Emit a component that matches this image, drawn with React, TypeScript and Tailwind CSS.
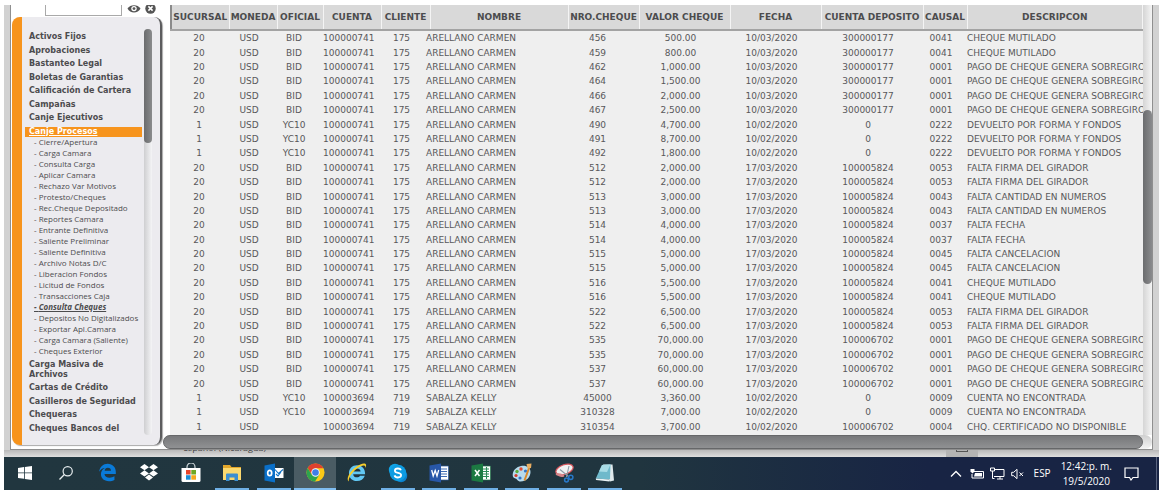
import React from "react";

const sobregiro = "PAGO DE CHEQUE GENERA SOBREGIRO";
const acc = "100000741";
const arellano = "ARELLANO CARMEN";

function bid(nro: string, valor: string, fecha: string, dep: string, causal: string, desc: string): string[] {
  return ["20", "USD", "BID", acc, "175", arellano, nro, valor, fecha, dep, causal, desc];
}

function yc(cuenta: string, cliente: string, nombre: string, nro: string, valor: string, causal: string, desc: string): string[] {
  return ["1", "USD", "YC10", cuenta, cliente, nombre, nro, valor, "10/02/2020", "0", causal, desc];
}

const rows: string[][] = [
  bid("456", "500.00", "10/03/2020", "300000177", "0041", "CHEQUE MUTILADO"),
  bid("459", "800.00", "10/03/2020", "300000177", "0041", "CHEQUE MUTILADO"),
  bid("462", "1,000.00", "10/03/2020", "300000177", "0001", sobregiro),
  bid("464", "1,500.00", "10/03/2020", "300000177", "0001", sobregiro),
  bid("466", "2,000.00", "10/03/2020", "300000177", "0001", sobregiro),
  bid("467", "2,500.00", "10/03/2020", "300000177", "0001", sobregiro),
  yc(acc, "175", arellano, "490", "4,700.00", "0222", "DEVUELTO POR FORMA Y FONDOS"),
  yc(acc, "175", arellano, "491", "8,700.00", "0222", "DEVUELTO POR FORMA Y FONDOS"),
  yc(acc, "175", arellano, "492", "1,800.00", "0222", "DEVUELTO POR FORMA Y FONDOS"),
  bid("512", "2,000.00", "17/03/2020", "100005824", "0053", "FALTA FIRMA DEL GIRADOR"),
  bid("512", "2,000.00", "17/03/2020", "100005824", "0053", "FALTA FIRMA DEL GIRADOR"),
  bid("513", "3,000.00", "17/03/2020", "100005824", "0043", "FALTA CANTIDAD EN NUMEROS"),
  bid("513", "3,000.00", "17/03/2020", "100005824", "0043", "FALTA CANTIDAD EN NUMEROS"),
  bid("514", "4,000.00", "17/03/2020", "100005824", "0037", "FALTA FECHA"),
  bid("514", "4,000.00", "17/03/2020", "100005824", "0037", "FALTA FECHA"),
  bid("515", "5,000.00", "17/03/2020", "100005824", "0045", "FALTA CANCELACION"),
  bid("515", "5,000.00", "17/03/2020", "100005824", "0045", "FALTA CANCELACION"),
  bid("516", "5,500.00", "17/03/2020", "100005824", "0041", "CHEQUE MUTILADO"),
  bid("516", "5,500.00", "17/03/2020", "100005824", "0041", "CHEQUE MUTILADO"),
  bid("522", "6,500.00", "17/03/2020", "100005824", "0053", "FALTA FIRMA DEL GIRADOR"),
  bid("522", "6,500.00", "17/03/2020", "100005824", "0053", "FALTA FIRMA DEL GIRADOR"),
  bid("535", "70,000.00", "17/03/2020", "100006702", "0001", sobregiro),
  bid("535", "70,000.00", "17/03/2020", "100006702", "0001", sobregiro),
  bid("537", "60,000.00", "17/03/2020", "100006702", "0001", sobregiro),
  bid("537", "60,000.00", "17/03/2020", "100006702", "0001", sobregiro),
  yc("100003694", "719", "SABALZA KELLY", "45000", "3,360.00", "0009", "CUENTA NO ENCONTRADA"),
  yc("100003694", "719", "SABALZA KELLY", "310328", "7,000.00", "0009", "CUENTA NO ENCONTRADA"),
  ["1", "USD", "", "100003694", "719", "SABALZA KELLY", "310354", "3,700.00", "10/02/2020", "100006702", "0004", "CHQ. CERTIFICADO NO DISPONIBLE"],
];

const columns = [
  { title: "SUCURSAL", col: "w-[58px]", cell: "pr-0.5 text-center" },
  { title: "MONEDA", col: "w-[48px]", cell: "pr-2 text-center" },
  { title: "OFICIAL", col: "w-[46px]", cell: "pr-3 text-center" },
  { title: "CUENTA", col: "w-[58px]", cell: "pr-2 text-center" },
  { title: "CLIENTE", col: "w-[49px]", cell: "pr-2 text-center" },
  { title: "NOMBRE", col: "w-[138px]", cell: "-indent-1 text-left" },
  { title: "NRO.CHEQUE", col: "w-[71px]", cell: "pr-3 text-center" },
  { title: "VALOR CHEQUE", col: "w-[91px]", cell: "pr-2 text-center" },
  { title: "FECHA", col: "w-[91px]", cell: "pr-2 text-center" },
  { title: "CUENTA DEPOSITO", col: "w-[102px]", cell: "pr-2 text-center" },
  { title: "CAUSAL", col: "w-[44px]", cell: "pr-2 text-center" },
  { title: "DESCRIPCON", col: "", cell: "text-left" },
];

const menuTop = ["Activos Fijos", "Aprobaciones", "Bastanteo Legal", "Boletas de Garantias", "Calificación de Cartera", "Campañas", "Canje Ejecutivos"];
const subMenu = [
  "Cierre/Apertura", "Carga Camara", "Consulta Carga", "Aplicar Camara", "Rechazo Var Motivos", "Protesto/Cheques",
  "Rec.Cheque Depositado", "Reportes Camara", "Entrante Definitiva", "Saliente Preliminar", "Saliente Definitiva",
  "Archivo Notas D/C", "Liberacion Fondos", "Licitud de Fondos", "Transacciones Caja", "Consulta Cheques",
  "Depositos No Digitalizados", "Exportar Apl.Camara", "Carga Camara (Saliente)", "Cheques Exterior",
];
const menuBottom = ["Carga Masiva de Archivos", "Cartas de Crédito", "Casilleros de Seguridad", "Chequeras", "Cheques Bancos del"];

function Sidebar() {
  return (
    <aside className="flex w-[151px] shrink-0 flex-col">
      <div className="flex h-3 items-start">
        <input aria-label="Buscar" className="ml-[34px] h-[11px] w-[77px] border border-t-0 border-[#a9a9a9] bg-white px-1 text-[8px] outline-none" />
        <button aria-label="Ver" className="ml-[5px] h-2 w-3.5">
          <svg viewBox="0 0 14 8" className="block h-2 w-3.5">
            <path d="M0.5 3.5C3-1 11-1 13.5 3.5C11 8.8 3 8.8 0.5 3.5Z" fill="#555" />
            <circle cx="7" cy="3.6" r="2.7" fill="#fff" />
            <circle cx="7" cy="3.6" r="1.4" fill="#555" />
          </svg>
        </button>
        <button aria-label="Cerrar" className="ml-1 h-[9px] w-[11px]">
          <svg viewBox="0 0 11 9" className="block h-[9px] w-[11px]">
            <circle cx="5.5" cy="3.5" r="5.2" fill="#555" />
            <path d="M3.4 1.4l4.2 4.2M7.6 1.4L3.4 5.6" stroke="#fff" strokeWidth="1.5" />
          </svg>
        </button>
      </div>
      <div className="ml-px flex flex-1 rounded-lg border-r-2 border-[#5c5c5e] bg-[#ecebef] shadow-[1px_1px_1px_#aaa]">
        <div className="w-[10px] shrink-0 rounded-l-lg bg-[#f7941d]" />
        <nav className="mt-[15px] mb-[11px] flex min-w-0 flex-1 flex-col justify-between pl-[3px] text-[8px] leading-[10px] font-bold text-[#4c4c4e]">
          {menuTop.map((m) => (
            <a key={m} href="#" className="block pl-1 whitespace-nowrap">{m}</a>
          ))}
          <a href="#" className="block bg-[#f7941d] pl-1 text-white underline">Canje Procesos</a>
          <ul className="-mt-1 pl-[9px] font-['Open_Sans',sans-serif] leading-[11px] font-normal whitespace-nowrap">
            {subMenu.map((m) => (
              <li key={m}>
                <a href="#" className={m === "Consulta Cheques" ? "block font-bold italic underline" : "block"}>- {m}</a>
              </li>
            ))}
          </ul>
          {menuBottom.map((m) => (
            <a key={m} href="#" className={m.startsWith("Carga") ? "block w-[90px] pl-1" : "block pl-1 whitespace-nowrap"}>{m}</a>
          ))}
        </nav>
        <div className="mt-3 mr-2 mb-2.5 ml-0.5 w-2 shrink-0 rounded-full bg-linear-to-r from-[#cfcfd1] to-[#f4f4f6]">
          <div className="h-[114px] rounded-full bg-linear-to-r from-[#6b6c6e] to-[#8a8b8d]" />
        </div>
      </div>
    </aside>
  );
}

function Results() {
  return (
    <div className="min-w-0 flex-1 overflow-hidden bg-[#efefef] pb-px">
      <table className="h-full w-full table-fixed border-collapse text-[9px] leading-[14px] whitespace-nowrap text-[#58585a]">
        <colgroup>
          {columns.map((c) => (
            <col key={c.title} className={c.col} />
          ))}
        </colgroup>
        <thead>
          <tr className="h-[25px] border-b-2 border-l-2 border-b-[#a3a3a3] border-l-[#8a8a8a] bg-[#d9d9d9]">
            {columns.map((c) => (
              <th key={c.title} className="border-r border-[#f4f4f4] p-0 text-center font-bold text-[#4c4c4e]">{c.title}</th>
            ))}
          </tr>
        </thead>
        <tbody>
          {rows.map((r, i) => (
            <tr key={i}>
              {r.map((v, j) => (
                <td key={j} className={`py-0 pl-0 ${columns[j].cell}`}>{v}</td>
              ))}
            </tr>
          ))}
        </tbody>
      </table>
    </div>
  );
}

const Start = () => (
  <svg viewBox="0 0 16 16" className="size-4"><path d="M1 3l6-.9v5.4H1zM7.8 2L15 1v6.5H7.800zM1 8.300h6v5.500L1 13zM7.800 8.300H15V15l-7.200-1z" fill="#fff" /></svg>
);
const Search = () => (
  <svg viewBox="0 0 16 16" className="size-4"><circle cx="9.700" cy="6.200" r="4.600" fill="none" stroke="#e8eef0" strokeWidth="1.200" /><path d="M6.400 9.500L1.500 14.500" stroke="#e8eef0" strokeWidth="1.300" /></svg>
);
const Edge = () => (
  <svg viewBox="0 0 24 24" className="size-[19px]"><path d="M1.500 11C2.200 5 6.500 1 12.200 1C18.500 1 22.500 5.500 22.500 11.500V14H8.200c.3 3.200 3 4.600 6.300 4.600 2.400 0 4.600-.7 6.300-1.800v4.600C18.900 22.500 16.400 23 13.800 23 7.600 23 3.700 19.300 3.700 14c0-3.400 1.900-6.200 5-7.700C5.600 6.500 3.200 8.200 1.500 11zM8.400 9.900h8c0-2.500-1.400-4-3.900-4-2.300 0-3.800 1.600-4.100 4z" fill="#0a7ad8" /></svg>
);
const Dropbox = () => (
  <svg viewBox="0 0 20 17" className="h-[17px] w-5"><path d="M5.500 0L10 3.200 5.500 6.300 1 3.200zM14.500 0L19 3.200l-4.500 3.100L10 3.200zM5.500 6.300L10 9.500l-4.500 3.100L1 9.500zM14.500 6.300L19 9.500l-4.500 3.100L10 9.500zM10 10.600l4 2.900-4 3-4-3z" fill="#fff" /></svg>
);
const Store = () => (
  <svg viewBox="0 0 20 20" className="size-5"><path d="M6 6V4a4 4 0 0 1 8 0v2" fill="none" stroke="#cfd8db" strokeWidth="1.200" /><path d="M0.500 5h19v12.500a1.500 1.500 0 0 1-1.500 1.500H2a1.500 1.500 0 0 1-1.500-1.500z" fill="#fff" /><path d="M5 7h4.600v4.500H5z" fill="#e8442a" /><path d="M10.300 7H15v4.500h-4.700z" fill="#6fa823" /><path d="M5 12.200h4.600v4.500H5z" fill="#1b8fd8" /><path d="M10.300 12.200H15v4.500h-4.700z" fill="#f5a81c" /></svg>
);
const Folder = () => (
  <svg viewBox="0 0 20 18" className="h-[18px] w-5"><path d="M1 1h7l1.500 2H19v13H1z" fill="#e3a72b" /><path d="M1 4h18v12H1z" fill="#fbd96f" /><path d="M4 17v-6.500a1 1 0 0 1 1-1h10a1 1 0 0 1 1 1V17h-3.500v-3.500h-5V17z" fill="#3d8fd1" /></svg>
);
const Outlook = () => (
  <svg viewBox="0 0 20 20" className="size-5"><path d="M10 5h9.500v10H10z" fill="#fff" /><path d="M11 6.500l3.500 4 4.500-4M12 11l2 2 3-4" fill="none" stroke="#1273c4" strokeWidth="1.100" /><path d="M0.500 2.500L11 .5v19L.5 17.500z" fill="#0a6fc8" /><ellipse cx="5.700" cy="10" rx="2" ry="2.700" fill="none" stroke="#fff" strokeWidth="1.700" /></svg>
);
const Chrome = () => (
  <svg viewBox="0 0 20 20" className="size-[19px]"><circle cx="10" cy="10" r="9.500" fill="#fbc916" /><path d="M1.800 5.200A9.500 9.500 0 0 1 18.300 5.500H10L6 12z" fill="#e0402f" /><path d="M1.800 5.200A9.500 9.500 0 0 0 9.500 19.500L14 12.300H6z" fill="#2da44e" /><circle cx="10" cy="10" r="4.400" fill="#fff" /><circle cx="10" cy="10" r="3.500" fill="#3f7ee8" /></svg>
);
const Explorer = () => (
  <svg viewBox="0 0 22 22" className="size-[21px]"><path d="M20 12.800H7.500c.3 2.300 1.900 3.300 3.900 3.300 1.500 0 2.700-.6 3.300-1.700h5c-1.200 3.600-4.300 5.600-8.300 5.600-5 0-8.300-3.300-8.300-8.200 0-5 3.400-8.400 8.400-8.400 5.300 0 8.700 3.600 8.500 9.400zM7.600 9.900h7.700c-.2-1.900-1.600-3-3.700-3s-3.600 1.100-4 3z" fill="#62c8f4" /><path d="M3 20.500C-.5 18 4 10 10 5.500S20.500.500 21 3c.2 1-.2 2.200-1 3.500.3-1.600 0-2.500-1-2.800C15.500 3 7 9.500 4 15.500c-1.200 2.600-1.300 4.200-1 5z" fill="#f7cf2c" /></svg>
);
const Skype = () => (
  <svg viewBox="0 0 20 20" className="size-5"><circle cx="7" cy="7" r="6.200" fill="#12a5e8" /><circle cx="13" cy="13" r="6.200" fill="#0b83d0" /><circle cx="10" cy="10" r="8.300" fill="#0e9ce2" /><path d="M13 7.300C12.500 6 11.300 5.500 9.900 5.500c-1.700 0-3 .8-3 2.200 0 3 6.200 1.500 6.200 4.400 0 1.500-1.300 2.400-3.200 2.400-1.700 0-2.900-.7-3.400-2.100" fill="none" stroke="#fff" strokeWidth="1.800" /></svg>
);
const Word = () => (
  <svg viewBox="0 0 20 20" className="size-5"><path d="M10 3h9.500v14H10z" fill="#fff" stroke="#2b579a" strokeWidth=".7" /><path d="M12 6h6M12 8.500h6M12 11h6M12 13.500h6" stroke="#3d6cb5" strokeWidth="1" /><path d="M0.500 2.500L12 .5v19L.5 17.500z" fill="#2857a8" /><path d="M2.700 7l1.500 6L6.200 7.500 8 13l1.700-6" fill="none" stroke="#fff" strokeWidth="1.300" /></svg>
);
const Excel = () => (
  <svg viewBox="0 0 20 20" className="size-5"><path d="M10 3h9.500v14H10z" fill="#fff" stroke="#1e7145" strokeWidth=".7" /><path d="M12 6h6M12 8.500h6M12 11h6M12 13.500h6M15.500 4v12" stroke="#2b8a56" strokeWidth="1.100" /><path d="M0.500 2.500L12 .5v19L.5 17.500z" fill="#1c7a42" /><path d="M4 7l4.500 6M8.500 7L4 13" stroke="#fff" strokeWidth="1.500" /></svg>
);
const Paint = () => (
  <svg viewBox="0 0 20 20" className="size-5"><path d="M9 3c5-1 9.500 1.500 9.500 6 0 5-4 9.500-10 9.500-3 0-3-2.500-5-3S.500 14 .7 11.500C1 7 4.500 4 9 3z" fill="#b7dbee" /><circle cx="5" cy="8.500" r="1.700" fill="#5cae3b" /><circle cx="9" cy="6" r="1.700" fill="#e2492f" /><circle cx="4" cy="12.500" r="1.600" fill="#d93d2b" /><circle cx="13.500" cy="8" r="1.600" fill="#2f74c9" /><circle cx="8" cy="15" r="1.600" fill="#2f74c9" /><path d="M18 2.500L12.500 17.500" stroke="#d98a2b" strokeWidth="2" /><path d="M14.500 1l5-.5-.5 4.500-3.500.5z" fill="#e9ae62" /></svg>
);
const Snip = () => (
  <svg viewBox="0 0 20 20" className="size-5"><ellipse cx="10.500" cy="6.500" rx="9" ry="4.800" transform="rotate(-20 10.500 6.500)" fill="#f1f1f1" stroke="#d6555c" strokeWidth="1.200" /><ellipse cx="6" cy="12" rx="4.500" ry="1.500" transform="rotate(15 6 12)" fill="#d6858a" /><path d="M6 6.500l8.500 7M15 3l-2.500 11" stroke="#8d9aa5" strokeWidth="1.100" /><circle cx="16.800" cy="14.300" r="2.100" fill="none" stroke="#2878c8" strokeWidth="1.500" /><circle cx="12.500" cy="17" r="1.900" fill="none" stroke="#2878c8" strokeWidth="1.500" /></svg>
);
const Notepad = () => (
  <svg viewBox="0 0 20 20" className="size-5"><path d="M8 1.500h9.500l1.500 16-4 1z" fill="#dfe9ec" /><path d="M7 2l8.500-.5L15 16.500.800 15.500z" fill="#6fb9cb" /><path d="M7 2l8.500-.5L12 9 4 8.500z" fill="#a8dce6" /><path d="M.800 15.500L15 16.500l-.5 2L1 17z" fill="#e9f3f5" /></svg>
);

const apps = [
  { name: "Inicio", Icon: Start, state: "idle" },
  { name: "Buscar en Windows", Icon: Search, state: "idle" },
  { name: "Edge", Icon: Edge, state: "idle" },
  { name: "Dropbox", Icon: Dropbox, state: "idle" },
  { name: "Store", Icon: Store, state: "idle" },
  { name: "Explorador", Icon: Folder, state: "open" },
  { name: "Outlook", Icon: Outlook, state: "open" },
  { name: "Chrome", Icon: Chrome, state: "active" },
  { name: "Internet Explorer", Icon: Explorer, state: "idle" },
  { name: "Skype", Icon: Skype, state: "open" },
  { name: "Word", Icon: Word, state: "open" },
  { name: "Excel", Icon: Excel, state: "open" },
  { name: "Paint", Icon: Paint, state: "open" },
  { name: "Recortes", Icon: Snip, state: "open" },
  { name: "Bloc de notas", Icon: Notepad, state: "open" },
];

function Taskbar() {
  return (
    <footer className="flex h-[33px] items-stretch bg-linear-to-r from-[#21363f] via-[#20353f] via-55% to-[#182444] to-80% text-white">
      <div className="flex w-[622px] shrink-0">
        {apps.map(({ name, Icon, state }) => (
          <button key={name} aria-label={name} className={state === "active" ? "flex flex-1 flex-col items-center bg-[#4a5c64]" : "flex flex-1 flex-col items-center"}>
            <span className="flex flex-1 items-center justify-center"><Icon /></span>
            <span className={state === "idle" ? "h-0.5 w-[34px]" : state === "open" ? "h-0.5 w-[34px] bg-[#6fb0e6]" : "h-0.5 w-full bg-[#7fbdf0]"} />
          </button>
        ))}
      </div>
      <div className="ml-auto flex items-center font-['Open_Sans',sans-serif] text-[10px]">
        <svg viewBox="0 0 12 8" className="h-2 w-3" aria-label="Mostrar iconos"><path d="M1 6.500l5-5 5 5" fill="none" stroke="#fff" strokeWidth="1.300" /></svg>
        <svg viewBox="0 0 14 12" className="ml-2 h-3 w-3.5"><path d="M4 3.500h9.500v6.500H2V6" fill="none" stroke="#fff" /><path d="M5 5h7v3.500H4z" fill="#fff" /><path d="M.5 1h4v2.500l-2 2-2-2z" fill="#fff" /></svg>
        <svg viewBox="0 0 15 13" className="ml-1.5 h-[13px] w-[15px]"><path d="M4.500 2.500H14v7H4M7 12h6M10 9.500V12M.5 1h4v3h-4zM2.500 4v7.500h2" fill="none" stroke="#fff" /></svg>
        <svg viewBox="0 0 13 12" className="ml-1.5 h-3 w-[13px]"><path d="M.7 4.300h2L6 1.300v9.400l-3.300-3h-2zM8.500 4.500l3.500 3.500M12 4.500L8.500 8" fill="none" stroke="#fff" /></svg>
        <span className="ml-2.5">ESP</span>
        <div className="ml-2.5 text-center leading-[15px]">
          <div>12:42:p. m.</div>
          <div>19/5/2020</div>
        </div>
        <svg viewBox="0 0 15 14" className="ml-3 h-3.5 w-[15px]"><path d="M1 1h13v9.500h-5L7 13l-1.500-2.500H1z" fill="none" stroke="#fff" strokeWidth="1.200" /></svg>
        <div className="ml-[17px] h-[33px] w-[3px] border-l border-[#5a6480]" />
      </div>
    </footer>
  );
}

export default function App() {
  return (
    <div className="bg-white py-[5px] pr-[5px] pl-1 font-['DejaVu_Sans',sans-serif]">
      <div className="bg-[#d2d2d2] pr-1.5 pl-1.5">
        <main className="flex flex-col border-x border-b border-[#8f8f8f] bg-white">
          <div className="flex h-[430px]">
            <div className="flex w-[159px] shrink-0">
              <div className="flex h-[440px] w-full"><Sidebar /></div>
            </div>
            <Results />
            <div className="flex w-[9px] shrink-0 flex-col bg-linear-to-r from-[#d5d5d5] to-[#f4f4f4]">
              <div className="mt-[105px] h-[174px] rounded-full bg-linear-to-r from-[#6b6c6e] to-[#8a8b8d]" />
            </div>
          </div>
          <div className="ml-[152px] flex h-[14px] rounded-full bg-linear-to-b from-[#d0d0d0] to-[#f4f4f4]">
            <div className="mr-[9px] flex-1 rounded-full border border-[#666769] bg-linear-to-b from-[#77787a] to-[#909193]" />
          </div>
        </main>
      </div>
      <div className="flex h-[7px] items-start overflow-hidden bg-linear-to-b from-[#b9b9b9] to-[#dedede]">
        <div className="-mt-[7px] ml-[179px] font-['Open_Sans',sans-serif] text-[9px] leading-[9px] text-[#444]">español (Nicaragua)</div>
        <div className="mr-[181px] ml-auto flex h-[7px] w-8 justify-center bg-[#b4b4b4]">
          <span className="h-0.5 w-3 border-x border-b border-[#555]" />
        </div>
      </div>
      <Taskbar />
    </div>
  );
}
